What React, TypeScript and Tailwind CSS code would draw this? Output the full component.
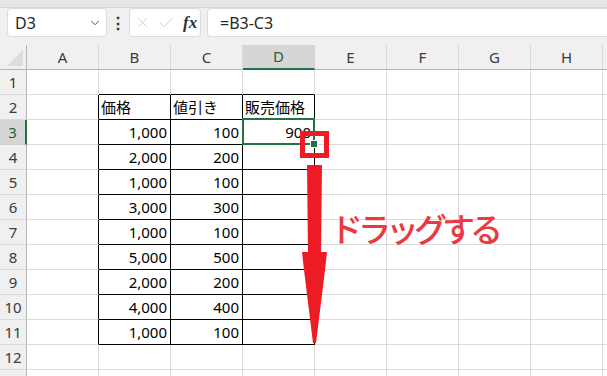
import { ChevronDown, X, Check } from 'lucide-react';

const COLS = ['A', 'B', 'C', 'D', 'E', 'F', 'G', 'H'];

// values for A..D, rows 1..13
const DATA: string[][] = [
  ['', '', '', ''],
  ['', '価格', '値引き', '販売価格'],
  ['', '1,000', '100', '900'],
  ['', '2,000', '200', ''],
  ['', '1,000', '100', ''],
  ['', '3,000', '300', ''],
  ['', '1,000', '100', ''],
  ['', '5,000', '500', ''],
  ['', '2,000', '200', ''],
  ['', '4,000', '400', ''],
  ['', '1,000', '100', ''],
  ['', '', '', ''],
  ['', '', '', ''],
];

const font = 'font-["Noto_Sans","Noto_Sans_CJK_JP",sans-serif]';

function Toolbar() {
  return (
    <div className="h-[45px] bg-[#f0f0f0] flex flex-col">
      <div className="h-[8px] bg-[#e4e6e9] border-b border-[#d4d6d9]" />
      <div className="h-[29px] flex items-stretch">
        {/* name box */}
        <div className="ml-[7px] w-[100px] bg-white border border-[#dcdcdc] rounded-[4px] flex items-center pl-[7px] pr-[4px]">
          <span className="text-[16px] text-[#262626] flex-1">D3</span>
          <ChevronDown size={14} strokeWidth={1.6} className="text-[#444]" />
        </div>
        <div className="w-[22px] flex items-center justify-center text-[16px] font-bold text-[#333]">⋮</div>
        {/* cancel / enter / fx */}
        <div className="w-[72px] bg-white border border-[#dcdcdc] rounded-[4px] flex items-center pl-[4px] gap-[6px]">
          <X size={17} strokeWidth={1.1} className="text-[#c4c4c4]" />
          <Check size={18} strokeWidth={1.1} className="text-[#c4c4c4]" />
          <span className='ml-[2px] font-["Liberation_Serif",serif] italic font-bold text-[17px] text-[#333]'>fx</span>
        </div>
        {/* formula */}
        <div className="ml-[6px] flex-1 bg-white border border-r-0 border-[#dcdcdc] rounded-l-[4px] flex items-center pl-[12px]">
          <span className="text-[16px] text-[#262626]">=B3-C3</span>
        </div>
      </div>
    </div>
  );
}

function ColumnHeader() {
  return (
    <div className="h-[25px] flex bg-[#f0f0f0]">
      <div className="w-[27px] shrink-0 border-r border-b border-[#b5b5b5] relative overflow-hidden">
        <div className="absolute right-[3px] bottom-[3px] w-0 h-0 border-l-[16px] border-l-transparent border-b-[16px] border-b-[#dcdcdc]" />
      </div>
      {COLS.map((c) =>
        c === 'D' ? (
          <div
            key={c}
            className="w-[72px] shrink-0 bg-[#d6d6d6] border-r border-r-[#d0d0d0] border-b-2 border-b-[#217346] flex items-center justify-center text-[15px] text-[#1c5f3a]"
          >
            {c}
          </div>
        ) : (
          <div
            key={c}
            className="w-[72px] shrink-0 border-r border-r-[#dadada] border-b border-b-[#b5b5b5] flex items-center justify-center text-[15px] text-[#3b3b3b]"
          >
            {c}
          </div>
        )
      )}
      <div className="flex-1 border-b border-[#b5b5b5]" />
    </div>
  );
}

function Row({ r }: { r: number }) {
  const vals = DATA[r - 1];
  const label = r <= 12 ? r : '';
  return (
    <div className="h-[25px] flex">
      {r === 3 ? (
        <div className="w-[27px] shrink-0 bg-[#d6d6d6] border-r-2 border-r-[#217346] border-b border-b-[#d0d0d0] flex items-center justify-center text-[15px] text-[#1c5f3a]">
          {label}
        </div>
      ) : (
        <div className="w-[27px] shrink-0 bg-[#f0f0f0] border-r border-r-[#b5b5b5] border-b border-b-[#dadada] flex items-center justify-center text-[15px] text-[#3b3b3b]">
          {label}
        </div>
      )}
      {COLS.map((c, ci) => {
        const v = ci < 4 ? vals[ci] : '';
        const inTable = r >= 2 && r <= 11 && ci >= 1 && ci <= 3;
        const above = r === 1 && ci >= 1 && ci <= 3;
        const leftOf = r >= 2 && r <= 11 && ci === 0;
        const right = inTable || leftOf ? 'border-r-black' : 'border-r-[#dadada]';
        const bottom = inTable || above ? 'border-b-black' : 'border-b-[#dadada]';
        const align = r === 2 ? 'justify-start pl-[2px]' : 'justify-end pr-[3px]';
        return (
          <div
            key={c}
            className={`w-[72px] shrink-0 border-r border-b ${right} ${bottom} flex items-end pb-[3px] ${align} text-[15px] leading-[18px] text-black`}
          >
            {v}
          </div>
        );
      })}
      <div className="flex-1 border-b border-[#dadada]" />
    </div>
  );
}

export default function App() {
  return (
    <div className={`relative w-[607px] h-[376px] overflow-hidden bg-white ${font}`}>
      <Toolbar />
      <ColumnHeader />
      {Array.from({ length: 13 }, (_, i) => (
        <Row key={i} r={i + 1} />
      ))}

      {/* selected cell D3 + fill handle */}
      <div className="absolute left-[242px] top-[118px] w-[73px] h-[27px] border-2 border-[#217346]" />
      <div className="absolute left-[310px] top-[140px] w-[8px] h-[8px] bg-[#217346] border border-white" />

      {/* annotation */}
      <div className="absolute left-[300px] top-[131px] w-[29px] h-[27px] border-[5px] border-[#ed1c24]" />
      <svg className="absolute left-0 top-0 pointer-events-none" width={607} height={376}>
        <polygon points="307,165 322,165 321,253 308,253" fill="#ed1c24" />
        <polygon points="302,252 327,252 325,270 316,343 313,343 304,270" fill="#ed1c24" />
      </svg>
      <span className='absolute left-[330px] top-[208px] text-[33px] leading-[40px] tracking-[-5px] text-[#ea3a40] font-["Noto_Sans_CJK_JP",sans-serif] font-medium'>
        ドラッグする
      </span>
    </div>
  );
}
